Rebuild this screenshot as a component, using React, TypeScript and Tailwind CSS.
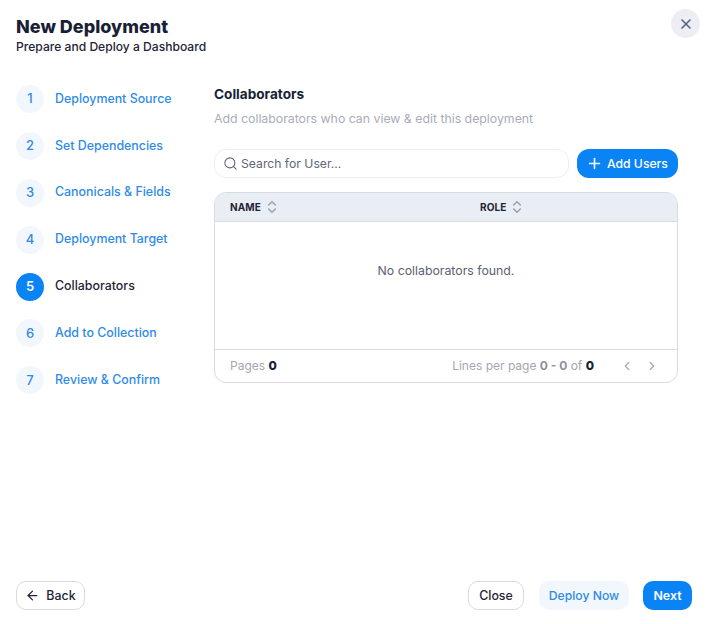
import { ArrowLeft, ChevronLeft, ChevronRight, ChevronsUpDown, Plus, Search, X } from "lucide-react";

const steps = [
  "Deployment Source",
  "Set Dependencies",
  "Canonicals & Fields",
  "Deployment Target",
  "Collaborators",
  "Add to Collection",
  "Review & Confirm",
];

const activeStep = 5;

function SortHeader({ label }: { label: string }) {
  return (
    <div className="flex items-center gap-[3px] text-[10px] font-bold tracking-[0.1px] text-[#1f2437]">
      <span>{label}</span>
      <ChevronsUpDown className="h-[16px] w-[16px] text-[#9aa1b2]" strokeWidth={2.25} />
    </div>
  );
}

export default function App() {
  return (
    <div className="relative flex h-[624px] w-[707px] flex-col bg-white pt-[16px] font-['Inter',sans-serif] text-[12.4px]">
      <button className="absolute right-[7px] top-[9px] flex h-[29px] w-[29px] items-center justify-center rounded-full bg-[#eceef3] text-[#5a6582]">
        <X className="h-[16px] w-[16px]" strokeWidth={2.5} />
      </button>

      <header className="px-[16px]">
        <h1 className="text-[18px] font-extrabold leading-[22px] text-[#1a1f36]">New Deployment</h1>
        <p className="text-[12.1px] font-medium leading-[17px] text-[#1f2437]">Prepare and Deploy a Dashboard</p>
      </header>

      <main className="flex flex-1 pl-[16px] pr-[29px] pt-[30px]">
        <ol className="flex w-[198px] shrink-0 flex-col gap-[18.9px]">
          {steps.map((step, index) => {
            const active = index + 1 === activeStep;
            return (
              <li key={step} className="flex items-center gap-[11px]">
                <span
                  className={
                    active
                      ? "flex h-[28px] w-[28px] items-center justify-center rounded-full bg-[#0a84f5] text-[13px] font-semibold text-white"
                      : "flex h-[28px] w-[28px] items-center justify-center rounded-full bg-[#f2f7fd] text-[13px] font-medium text-[#2f8be6]"
                  }
                >
                  {index + 1}
                </span>
                <span className={active ? "font-medium text-[#1f2437]" : "font-medium text-[#2f8be6]"}>{step}</span>
              </li>
            );
          })}
        </ol>

        <section className="flex-1">
          <h2 className="text-[13.6px] font-bold leading-[18px] text-[#1a1f36]">Collaborators</h2>
          <p className="mt-[7px] text-[12.3px] leading-[18px] text-[#a9adb8]">
            Add collaborators who can view &amp; edit this deployment
          </p>

          <div className="mt-[21px] flex gap-[8px]">
            <div className="flex h-[29px] flex-1 items-center gap-[3px] rounded-[12px] border border-[#eceef1] px-[8px] text-[12.2px] text-[#5f6679]">
              <Search className="h-[15px] w-[15px]" strokeWidth={1.75} />
              <span className="pt-[1px]">Search for User...</span>
            </div>
            <button className="flex h-[29px] w-[101px] items-center gap-[4px] rounded-[12px] bg-[#0a84f5] pl-[9px] text-[12.2px] font-medium text-white">
              <Plus className="h-[17px] w-[17px]" strokeWidth={2.25} />
              <span className="pt-[1px]">Add Users</span>
            </button>
          </div>

          <div className="mt-[14px] overflow-hidden rounded-[12px] border border-[#d8dbe1]">
            <div className="grid h-[29px] grid-cols-[250px_1fr] items-center border-b border-[#d8dbe1] bg-[#e9edf4] px-[15px]">
              <SortHeader label="NAME" />
              <SortHeader label="ROLE" />
            </div>
            <div className="flex h-[127px] items-start justify-center pt-[40px] text-[12.3px] text-[#5b6272]">
              No collaborators found.
            </div>
            <div className="flex h-[33px] items-center justify-between border-t border-[#d8dbe1] pl-[15px] pr-[18px] text-[12px] text-[#a3a7b2]">
              <span>
                Pages <b className="font-extrabold text-[#1a1f36]">0</b>
              </span>
              <div className="flex items-center">
                <span>
                  Lines per page <b className="font-bold text-[#8d919c]">0 - 0</b> of{" "}
                  <b className="font-extrabold text-[#1a1f36]">0</b>
                </span>
                <div className="ml-[26px] flex items-center gap-[11px] text-[#a3a7b2]">
                  <ChevronLeft className="h-[14px] w-[14px]" />
                  <ChevronRight className="h-[14px] w-[14px]" />
                </div>
              </div>
            </div>
          </div>
        </section>
      </main>

      <footer className="flex items-center justify-between pb-[14px] pl-[16px] pr-[15px]">
        <button className="flex h-[29px] w-[69px] items-center justify-center gap-[6px] rounded-[10px] border border-[#d8dbe1] font-medium text-[#1f2437]">
          <ArrowLeft className="h-[15px] w-[15px]" strokeWidth={2} />
          <span className="pt-[1px]">Back</span>
        </button>
        <div className="flex items-center">
          <button className="h-[29px] w-[56px] rounded-[10px] border border-[#d8dbe1] pt-[1px] font-medium text-[#1f2437]">Close</button>
          <button className="ml-[15px] h-[29px] w-[90px] rounded-[10px] bg-[#f2f7fd] pt-[1px] text-[12.2px] font-medium text-[#2f8be6]">Deploy Now</button>
          <button className="ml-[14px] h-[29px] w-[49px] rounded-[10px] bg-[#0a84f5] pt-[1px] font-semibold text-white">Next</button>
        </div>
      </footer>
    </div>
  );
}
